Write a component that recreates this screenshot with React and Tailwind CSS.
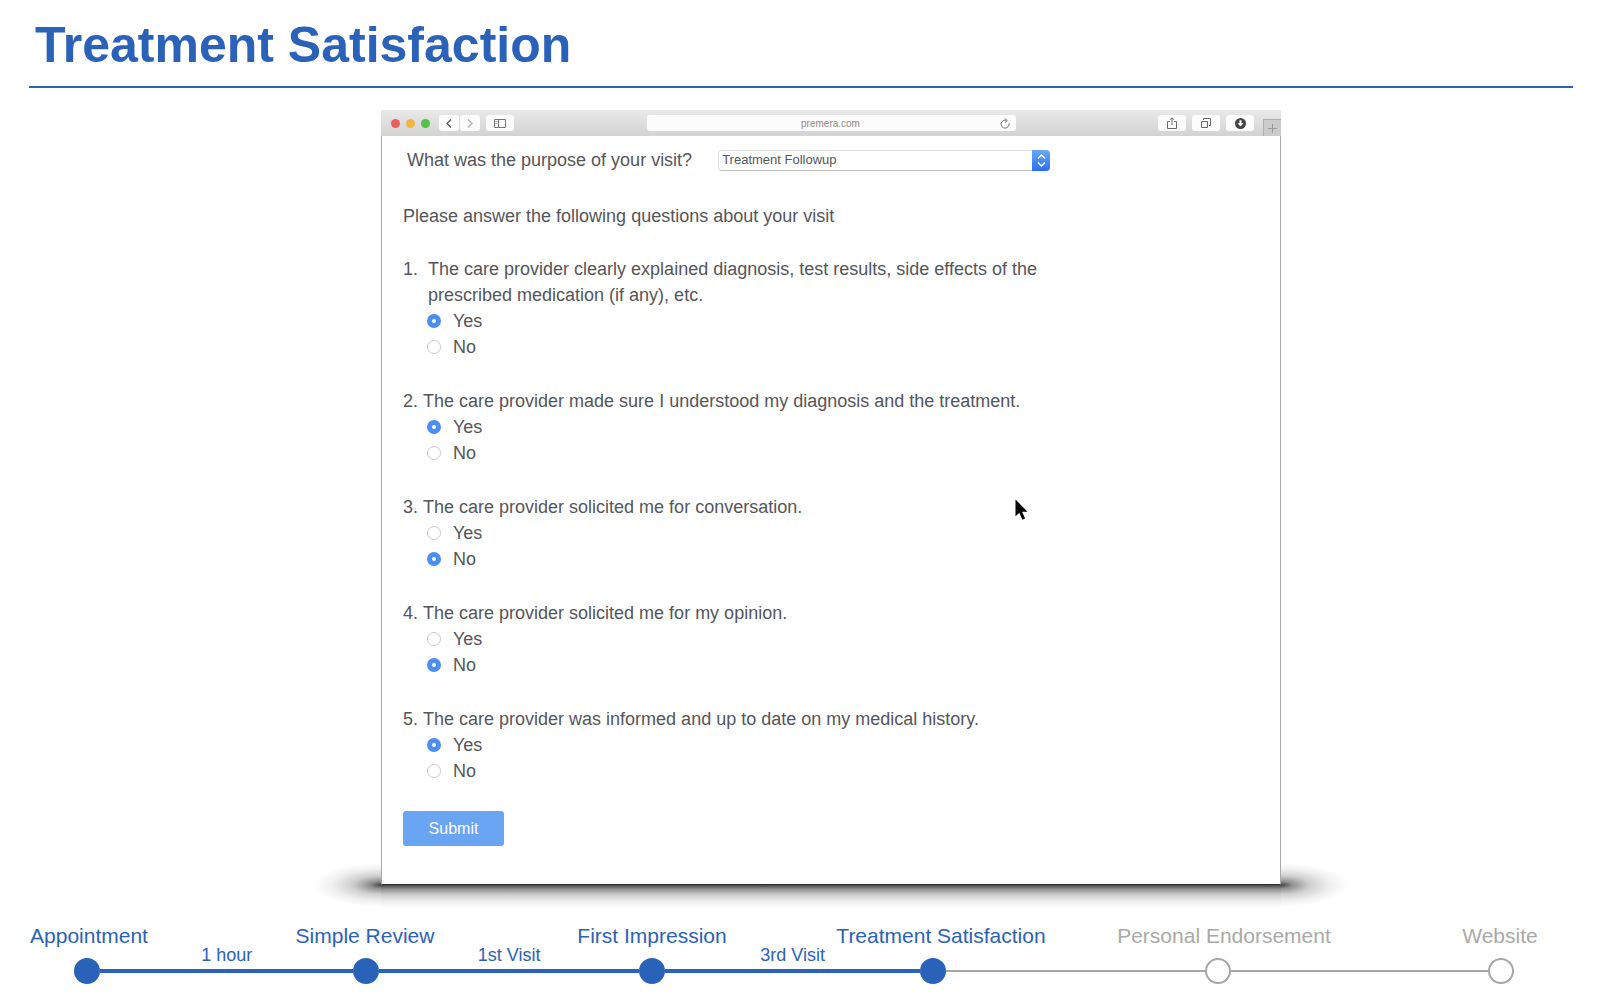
import React from 'react';

const questions = [
  {
    number: '1.',
    text: 'The care provider clearly explained diagnosis, test results, side effects of the prescribed medication (if any), etc.',
    answer: 'Yes',
    wide: true,
  },
  { number: '2.', text: 'The care provider made sure I understood my diagnosis and the treatment.', answer: 'Yes' },
  { number: '3.', text: 'The care provider solicited me for conversation.', answer: 'No' },
  { number: '4.', text: 'The care provider solicited me for my opinion.', answer: 'No' },
  { number: '5.', text: 'The care provider was informed and up to date on my medical history.', answer: 'Yes' },
];

const steps = [
  { label: 'Appointment', done: true },
  { label: 'Simple Review', done: true },
  { label: 'First Impression', done: true },
  { label: 'Treatment Satisfaction', done: true },
  { label: 'Personal Endorsement', done: false },
  { label: 'Website', done: false },
];

const links = [
  { label: '1 hour', done: true, grow: 'grow-[279]' },
  { label: '1st Visit', done: true, grow: 'grow-[286]' },
  { label: '3rd Visit', done: true, grow: 'grow-[281]' },
  { label: '', done: false, grow: 'grow-[285]' },
  { label: '', done: false, grow: 'grow-[283]' },
];

function ToolButton({ label, className, children }) {
  return (
    <button
      type="button"
      aria-label={label}
      className={`flex h-4 items-center justify-center rounded-[3px] bg-[#fcfcfc] text-[#555] ${className}`}
    >
      {children}
    </button>
  );
}

function BrowserBar() {
  return (
    <header className="grid h-[26px] grid-cols-[1fr_41%_1fr] items-center bg-linear-to-b from-[#e9e9e9] to-[#d3d3d3]">
      <div className="flex items-center pl-2.5">
        <div className="mr-[9px] flex gap-[6px]">
          <span className="size-[9px] rounded-full bg-[#e8605a]" />
          <span className="size-[9px] rounded-full bg-[#f0b840]" />
          <span className="size-[9px] rounded-full bg-[#55c148]" />
        </div>
        <ToolButton label="Back" className="mr-px w-5">
          <svg width="6" height="9" viewBox="0 0 6 9" fill="none" stroke="currentColor" strokeWidth="1.2">
            <path d="M5 .5 1 4.5l4 4" />
          </svg>
        </ToolButton>
        <ToolButton label="Forward" className="mr-1.5 w-5">
          <svg width="6" height="9" viewBox="0 0 6 9" fill="none" stroke="#aaa" strokeWidth="1.2">
            <path d="M1 .5 5 4.5l-4 4" />
          </svg>
        </ToolButton>
        <ToolButton label="Sidebar" className="w-7">
          <svg width="12" height="9" viewBox="0 0 12 9" fill="none" stroke="#777">
            <path d="M.5 .5h11v8H.5zM4.5 .5v8" />
            <path d="M1.5 2.5h2M1.5 4.5h2" strokeWidth=".7" />
          </svg>
        </ToolButton>
      </div>
      <div className="flex h-4 items-center rounded-[3px] bg-[#fcfcfc] px-1.5">
        <input
          type="text"
          aria-label="Address"
          defaultValue="premera.com"
          className="h-4 min-w-0 flex-1 bg-transparent pt-px pl-[9px] text-center text-[10px] text-[#8a8a8a] outline-none"
        />
        <button type="button" aria-label="Reload">
          <svg width="10" height="11" viewBox="0 0 10 11" fill="none" stroke="#777" strokeWidth="1">
            <path d="M9 5.2A4 4 0 1 1 6.6 2.4" />
            <path d="M5 .3 7.3 2.6 5 4.6" />
          </svg>
        </button>
      </div>
      <div className="flex items-center justify-end self-stretch">
        <ToolButton label="Share" className="mr-1.5 w-7">
          <svg width="10" height="12" viewBox="0 0 10 12" fill="none" stroke="#6a6a6a">
            <path d="M3 4.5H.5v7h9v-7H7M5 8V1M3 2.8l2-2 2 2" />
          </svg>
        </ToolButton>
        <ToolButton label="Tabs" className="mr-1.5 w-7">
          <svg width="10" height="10" viewBox="0 0 10 10" fill="none" stroke="#6a6a6a">
            <path d="M.5 3.5h6v6h-6zM2.5 2V.5h7v7H8" />
          </svg>
        </ToolButton>
        <ToolButton label="Downloads" className="mr-[9px] w-7">
          <svg width="11" height="11" viewBox="0 0 11 11">
            <circle cx="5.5" cy="5.5" r="5.5" fill="#444" />
            <path d="M4.5 2.3h2v3h2l-3 3.2-3-3.2h2z" fill="#fff" />
          </svg>
        </ToolButton>
        <button
          type="button"
          aria-label="New tab"
          className="flex h-[17px] w-[18px] items-center justify-center self-end border-t border-l border-[#b0b0b0] bg-[#cbcbcb]"
        >
          <svg width="9" height="9" viewBox="0 0 9 9" stroke="#999">
            <path d="M4.5 0v9M0 4.5h9" />
          </svg>
        </button>
      </div>
    </header>
  );
}

function FloorShadow() {
  return (
    <div className="absolute -inset-x-[68px] -bottom-6 flex h-12">
      <div className="w-[68px] bg-[radial-gradient(ellipse_68px_22px_at_right_center,#000000bb,#00000070_16%,#00000030_42%,#00000010_72%,#00000000)]" />
      <div className="flex-1 bg-[linear-gradient(to_bottom,#000000bb_24px,#00000070_28px,#00000030_34px,#00000010_41px,#00000000_47px)]" />
      <div className="w-[68px] bg-[radial-gradient(ellipse_68px_22px_at_left_center,#000000bb,#00000070_16%,#00000030_42%,#00000010_72%,#00000000)]" />
    </div>
  );
}

function Question({ number, text, answer, wide }) {
  return (
    <fieldset className="mb-7 last-of-type:mb-[27px]">
      <legend className={`flex max-w-[660px] ${wide ? 'gap-2.5' : 'gap-[5px]'}`}>
        <span>{number}</span>
        <span>{text}</span>
      </legend>
      {['Yes', 'No'].map((option) => (
        <label key={option} className="flex items-center gap-3 pl-6">
          <input
            type="radio"
            name={`question-${number}`}
            value={option}
            defaultChecked={option === answer}
            className="size-[14px] appearance-none rounded-full border border-[#c9c9c9] bg-white checked:border-[5px] checked:border-[#4c8ff2]"
          />
          {option}
        </label>
      ))}
    </fieldset>
  );
}

function Timeline() {
  return (
    <footer className="relative mt-[38px] overflow-hidden pb-4">
      <ol className="-mr-[33px] -ml-[49px] grid grid-cols-[276fr_276fr_298fr_280fr_286fr_266fr] text-center text-[21px] leading-[26px]">
        {steps.map((s) => (
          <li key={s.label} className={s.done ? 'text-[#2b62b6]' : 'text-[#a9a9a9]'}>
            {s.label}
          </li>
        ))}
      </ol>
      <div className="-mt-1 mr-[86px] ml-[74px] flex items-end">
        {steps.map((s, i) => (
          <React.Fragment key={s.label}>
            <span
              className={`size-[26px] shrink-0 rounded-full border-2 ${
                s.done ? 'border-[#2b62b9] bg-[#2b62b9]' : 'border-[#a6a6a6] bg-white'
              }`}
            />
            {links[i] && (
              <div className={`flex basis-0 flex-col pb-[11px] text-center text-lg leading-5 text-[#2b62b6] ${links[i].grow}`}>
                <span className="mb-1">{links[i].label}</span>
                <span className={links[i].done ? 'h-1 bg-[#2b62b9]' : 'mb-px h-0.5 bg-[#a6a6a6]'} />
              </div>
            )}
          </React.Fragment>
        ))}
      </div>
    </footer>
  );
}

export default function App() {
  return (
    <div className="min-h-screen overflow-x-hidden bg-white font-['Liberation_Sans',Arial,sans-serif]">
      <h1 className="mr-[27px] ml-[29px] border-b-2 border-[#2e62ae] pt-4 pb-3 pl-1.5 text-[50px] leading-[58px] font-bold text-[#2b62b9]">
        Treatment Satisfaction
      </h1>

      <main className="pt-[22px] pl-[62px]">
        <div className="relative mx-auto max-w-[900px]">
          <FloorShadow />
          <section className="relative">
            <BrowserBar />
            <form
              className="border-x border-b border-x-[#a9a9a9] border-b-[#333] bg-white pt-[11px] pb-[38px] pl-[21px] text-lg leading-[26px] text-[#55565b]"
              onSubmit={(e) => e.preventDefault()}
            >
              <div className="mb-[30px] flex items-center gap-[26px] pl-1">
                <label htmlFor="purpose">What was the purpose of your visit?</label>
                <div className="relative w-[332px]">
                  <select
                    id="purpose"
                    className="block h-[21px] w-full appearance-none rounded-[4px] border border-[#dcdcdc] border-b-[#bdbdbd] bg-white pl-[3px] text-[13px] leading-4"
                  >
                    <option>Treatment Followup</option>
                  </select>
                  <span className="pointer-events-none absolute inset-y-0 right-0 flex w-[18px] items-center justify-center rounded-r-[4px] bg-linear-to-b from-[#6aa8f7] to-[#2a6df0]">
                    <svg width="9" height="13" viewBox="0 0 9 13" fill="none" stroke="#fff" strokeWidth="1.5">
                      <path d="M1 4.5 4.5 1 8 4.5M1 8.5 4.5 12 8 8.5" />
                    </svg>
                  </span>
                </div>
              </div>
              <p className="mb-[27px]">Please answer the following questions about your visit</p>
              {questions.map((q) => (
                <Question key={q.number} {...q} />
              ))}
              <button type="submit" className="block h-[35px] w-[101px] rounded-[3px] bg-[#6aa5f3] text-base text-white">
                Submit
              </button>
            </form>
          </section>
          <svg className="absolute top-[389px] left-[634px]" width="13" height="22" viewBox="0 0 13 22">
            <path d="M.5 .5v16.7l3.8-3.5 3.1 7 2.7-1.2-3-6.8h5.4z" fill="#000" />
          </svg>
        </div>
      </main>

      <Timeline />
    </div>
  );
}
